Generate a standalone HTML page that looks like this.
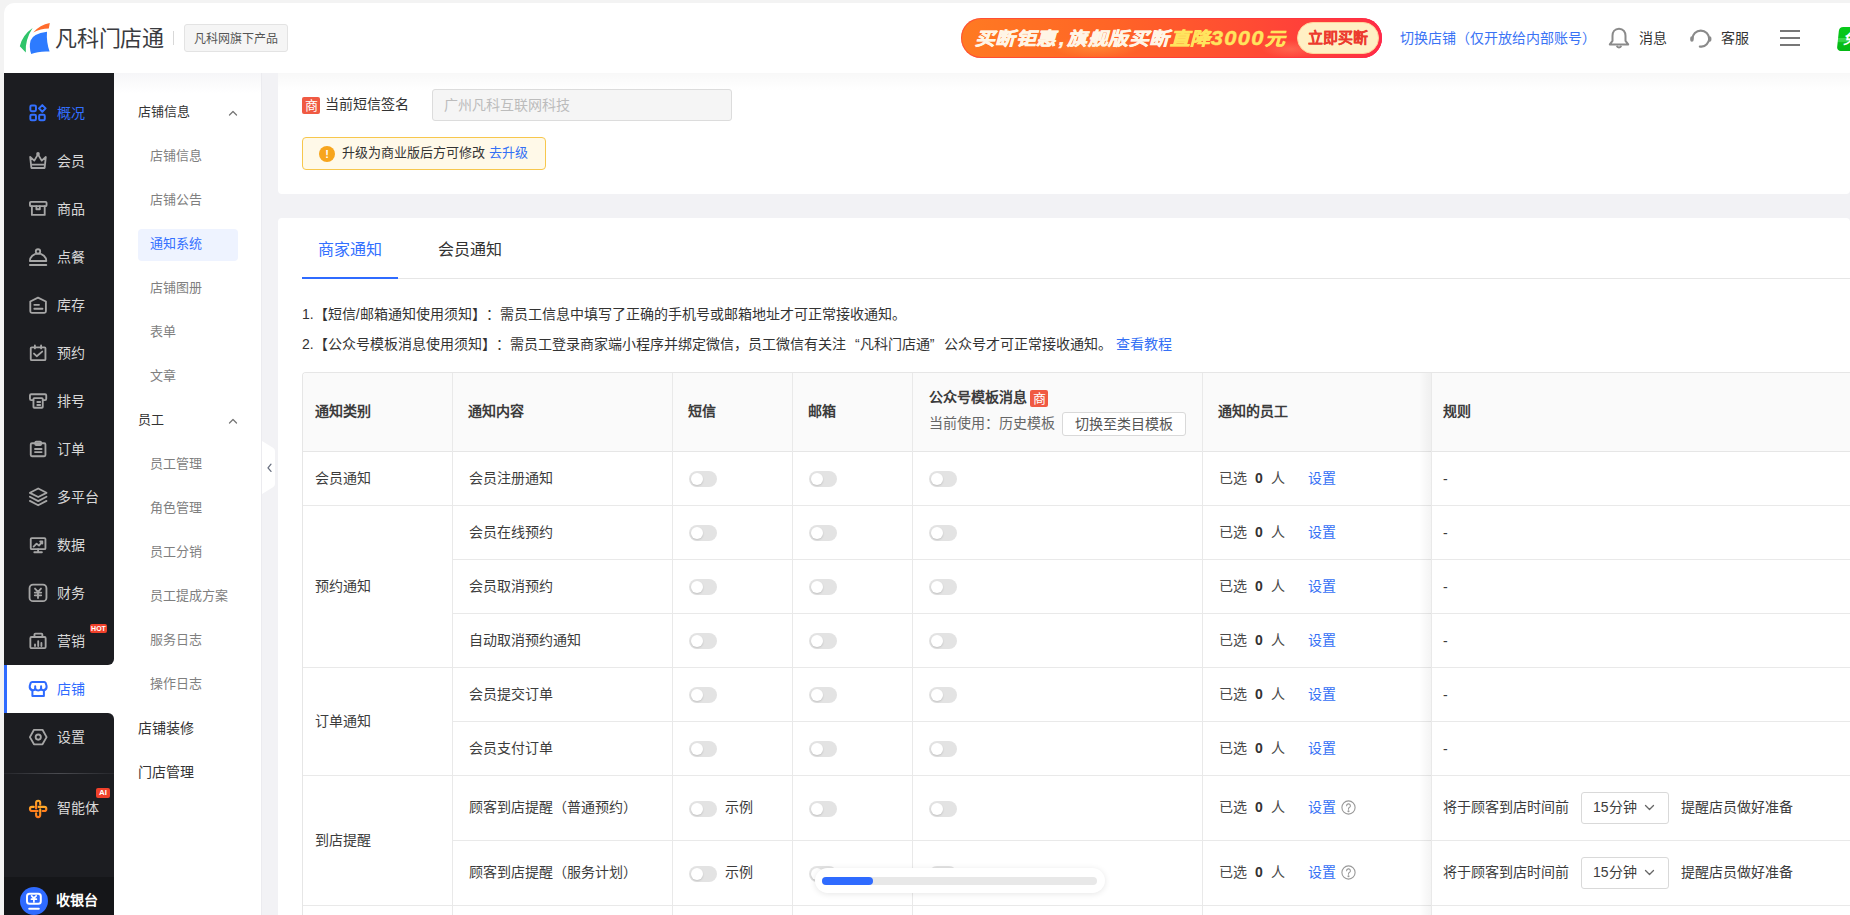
<!DOCTYPE html><html lang="zh-CN"><head><meta charset="utf-8"><style>
*{box-sizing:border-box;margin:0;padding:0}
html,body{width:1850px;height:915px;overflow:hidden;background:#f3f3f3;font-family:"Liberation Sans",sans-serif;color:#333;text-spacing-trim:space-all}
body{position:relative}
.a{position:absolute}
.t{position:absolute;white-space:nowrap}
svg{position:absolute;overflow:visible}
.nt{position:absolute;left:57px;font-size:14px;line-height:16px;color:#d8d8d8;white-space:nowrap}
.si{position:absolute;left:150px;font-size:13px;line-height:16px;color:#7f7f7f;white-space:nowrap}
.sg{position:absolute;left:138px;font-size:13px;line-height:16px;color:#333;white-space:nowrap}
.tg{position:absolute;width:28px;height:16px;border-radius:8px;background:#e3e3e3}
.tg:after{content:"";position:absolute;left:2px;top:2px;width:12px;height:12px;border-radius:50%;background:#fff;box-shadow:0 1px 2px rgba(0,0,0,.15)}
.ct{position:absolute;font-size:14px;line-height:16px;color:#3c3c3c;white-space:nowrap}
.hl{position:absolute;height:1px;background:#e9e9e9}
.vl{position:absolute;width:1px;background:#e9e9e9}
.lk{color:#3470f5}
</style></head><body>
<div class="a" style="left:4px;top:3px;width:1846px;height:912px;background:#f2f2f5;border-top-left-radius:10px"></div>
<div class="a" style="left:4px;top:3px;width:1846px;height:70px;background:#fff;border-top-left-radius:10px"></div>
<div class="a" style="left:114px;top:73px;width:147px;height:842px;background:#fff"></div>
<div class="a" style="left:261px;top:73px;width:1px;height:842px;background:#ebebef"></div>
<div class="a" style="left:4px;top:73px;width:110px;height:842px;background:#fff"></div>
<div class="a" style="left:4px;top:73px;width:110px;height:592px;background:#1c1d21;border-bottom-right-radius:6px"></div>
<div class="a" style="left:4px;top:713px;width:110px;height:202px;background:#1c1d21;border-top-right-radius:6px"></div>
<div class="a" style="left:4px;top:665px;width:3px;height:48px;background:#2f6bff"></div>
<div class="a" style="left:4px;top:773px;width:110px;height:1px;background:linear-gradient(90deg,#26272c,#4a4b50 50%,#26272c)"></div>
<div class="a" style="left:4px;top:877px;width:110px;height:38px;background:#151619"></div>
<svg style="left:28.5px;top:104px" width="18" height="18" viewBox="0 0 18 18" fill="none" stroke="#3370ff" stroke-width="2.0" stroke-linecap="round" stroke-linejoin="round"><rect x="1.35" y="1.55" width="5.6" height="5.6" rx="1.3"/><path d="M13.3 1.1 L16.6 4.4 L13.3 7.7 L10 4.4 Z"/><rect x="1.35" y="10.75" width="5.6" height="5.6" rx="1.3"/><rect x="10.15" y="10.75" width="5.6" height="5.6" rx="1.3"/></svg>
<div class="nt" style="top:105px;color:#3370ff">概况</div>
<svg style="left:28.5px;top:152px" width="18" height="18" viewBox="0 0 18 18" fill="none" stroke="#a6a6a6" stroke-width="1.85" stroke-linecap="round" stroke-linejoin="round"><path d="M1.2 5 L5.3 8.6 L9 2.4 L12.7 8.6 L16.8 5 L15.6 16 H2.4 Z"/><path d="M3.2 12.6 H14.8"/><circle cx="9" cy="1.9" r="0.9"/></svg>
<div class="nt" style="top:153px;color:#d8d8d8">会员</div>
<svg style="left:28.5px;top:199px" width="18" height="18" viewBox="0 0 18 18" fill="none" stroke="#a6a6a6" stroke-width="1.85" stroke-linecap="round" stroke-linejoin="round"><rect x="0.95" y="2.85" width="16.6" height="4.3" rx="1"/><path d="M2.9 7.1 V15.9 H15.7 V7.1"/><path d="M7.4 7.1 V10.2 H10.8 V7.1"/></svg>
<div class="nt" style="top:201px;color:#d8d8d8">商品</div>
<svg style="left:28.5px;top:247px" width="18" height="18" viewBox="0 0 18 18" fill="none" stroke="#a6a6a6" stroke-width="1.85" stroke-linecap="round" stroke-linejoin="round"><circle cx="9" cy="4.4" r="2.2"/><path d="M0.9 14 A8.2 7.4 0 0 1 17.3 14 Z"/><path d="M0.9 18 H17.3"/></svg>
<div class="nt" style="top:249px;color:#d8d8d8">点餐</div>
<svg style="left:28.5px;top:295px" width="18" height="18" viewBox="0 0 18 18" fill="none" stroke="#a6a6a6" stroke-width="1.85" stroke-linecap="round" stroke-linejoin="round"><path d="M1.3 6.5 L9 2.6 L16.9 6.5 V16.3 A1.5 1.5 0 0 1 15.4 17.8 H2.8 A1.5 1.5 0 0 1 1.3 16.3 Z"/><path d="M5.3 9.8 H10 M5.3 13.7 H13.5"/></svg>
<div class="nt" style="top:297px;color:#d8d8d8">库存</div>
<svg style="left:28.5px;top:343px" width="18" height="18" viewBox="0 0 18 18" fill="none" stroke="#a6a6a6" stroke-width="1.85" stroke-linecap="round" stroke-linejoin="round"><rect x="1.75" y="4.35" width="14.7" height="12.8" rx="1"/><path d="M5.9 2.4 V5.4 M12.1 2.4 V5.4"/><path d="M5 10.6 L7.7 13.2 L13.2 8.6"/></svg>
<div class="nt" style="top:345px;color:#d8d8d8">预约</div>
<svg style="left:28.5px;top:391px" width="18" height="18" viewBox="0 0 18 18" fill="none" stroke="#a6a6a6" stroke-width="1.85" stroke-linecap="round" stroke-linejoin="round"><path d="M4.45 9.05 H2.2 A1.25 1.25 0 0 1 0.95 7.8 V4.5 A1.25 1.25 0 0 1 2.2 3.25 H16 A1.25 1.25 0 0 1 17.25 4.5 V7.8 A1.25 1.25 0 0 1 16 9.05 H13.75"/><rect x="4.45" y="7.15" width="9.3" height="9.6" rx="0.8"/><path d="M8.3 11 H11.2 M8.3 14 H11.2"/></svg>
<div class="nt" style="top:393px;color:#d8d8d8">排号</div>
<svg style="left:28.5px;top:439px" width="18" height="18" viewBox="0 0 18 18" fill="none" stroke="#a6a6a6" stroke-width="1.85" stroke-linecap="round" stroke-linejoin="round"><rect x="1.75" y="4.25" width="14.7" height="13" rx="1.2"/><rect x="6.3" y="2.6" width="5.8" height="3.4" rx="0.8"/><path d="M6 10 H12.6 M6 13.1 H12.6"/></svg>
<div class="nt" style="top:441px;color:#d8d8d8">订单</div>
<svg style="left:28.5px;top:487px" width="18" height="18" viewBox="0 0 18 18" fill="none" stroke="#a6a6a6" stroke-width="1.85" stroke-linecap="round" stroke-linejoin="round"><path d="M9.2 1.5 L17.5 5.8 L9.2 10 L0.9 5.8 Z"/><path d="M0.9 9.8 L9.2 14.1 L17.5 9.8"/><path d="M0.9 13.9 L9.2 18.2 L17.5 13.9"/></svg>
<div class="nt" style="top:489px;color:#d8d8d8">多平台</div>
<svg style="left:28.5px;top:535px" width="18" height="18" viewBox="0 0 18 18" fill="none" stroke="#a6a6a6" stroke-width="1.85" stroke-linecap="round" stroke-linejoin="round"><rect x="1.75" y="3.05" width="14.7" height="11.1" rx="1"/><path d="M9.1 14.2 V17 M5.3 17.2 H12.9"/><path d="M4.6 11.6 L7.6 8.6 L10 10.6 L13.3 6.6 M11.2 6.5 H13.3 V8.6"/></svg>
<div class="nt" style="top:537px;color:#d8d8d8">数据</div>
<svg style="left:28.5px;top:583px" width="18" height="18" viewBox="0 0 18 18" fill="none" stroke="#a6a6a6" stroke-width="1.85" stroke-linecap="round" stroke-linejoin="round"><rect x="0.55" y="1.65" width="16.9" height="16.5" rx="3.5"/><path d="M6 5.6 L9 8.8 L12 5.6 M9 8.8 V15 M5.8 9.6 H12.2 M5.8 12.3 H12.2"/></svg>
<div class="nt" style="top:585px;color:#d8d8d8">财务</div>
<svg style="left:28.5px;top:631px" width="18" height="18" viewBox="0 0 18 18" fill="none" stroke="#a6a6a6" stroke-width="1.85" stroke-linecap="round" stroke-linejoin="round"><path d="M5.45 5.95 V3.5 A0.9 0.9 0 0 1 6.35 2.6 H12.45 A0.9 0.9 0 0 1 13.35 3.5 V5.95"/><rect x="1.35" y="5.95" width="15.3" height="11.2" rx="1.2"/><path d="M6 15 V13.4 M9.2 15 V10.2 M12.4 15 V12"/></svg>
<div class="nt" style="top:633px;color:#d8d8d8">营销</div>
<svg style="left:28.5px;top:680px" width="18" height="18" viewBox="0 0 18 18" fill="none" stroke="#2f6bff" stroke-width="2.0" stroke-linecap="round" stroke-linejoin="round"><path d="M3.3 1.9 H15.2 Q16.2 1.9 16.6 2.9 L17.6 6 Q18 9.5 14.8 10.3 Q12.6 10.6 12.1 8.8 Q10.9 10.6 9.2 10.6 Q7.4 10.6 6.2 8.8 Q5.7 10.6 3.5 10.3 Q0.3 9.5 0.7 6 L1.7 2.9 Q2.1 1.9 3.3 1.9 Z"/><path d="M6.2 6.2 V9 M12.1 6.2 V9"/><path d="M3.4 10.4 V15.9 H14.9 V10.4"/></svg>
<div class="nt" style="top:681px;color:#2f6bff">店铺</div>
<svg style="left:28.5px;top:728px" width="18" height="18" viewBox="0 0 18 18" fill="none" stroke="#a6a6a6" stroke-width="1.85" stroke-linecap="round" stroke-linejoin="round"><path d="M5 1.8 H13.5 L17.6 9.1 L13.5 16.3 H5 L0.9 9.1 Z"/><circle cx="9.25" cy="9.1" r="2.6"/></svg>
<div class="nt" style="top:729px;color:#d8d8d8">设置</div>
<div class="a" style="left:90px;top:624px;width:17px;height:9px;background:#f0412b;border-radius:2px;color:#fff;font-size:7px;font-weight:bold;line-height:9px;text-align:center;letter-spacing:0">HOT</div>
<svg style="left:28px;top:799px" width="20" height="20" viewBox="0 0 20 20" fill="none" stroke="url(#og)" stroke-width="2.1" stroke-linecap="round"><defs><linearGradient id="og" x1="0" y1="0" x2="0" y2="1"><stop offset="0" stop-color="#ffab2a"/><stop offset="1" stop-color="#ff7a1c"/></linearGradient></defs><path d="M8.1 9.5 V3.8 A2.05 2.05 0 0 1 12.2 3.8 V5.6"/><path d="M10.6 7.9 H16.3 A2.05 2.05 0 0 1 16.3 12 H14.5"/><path d="M12.2 10.4 V16.1 A2.05 2.05 0 0 1 8.1 16.1 V14.3"/><path d="M9.7 12 H4 A2.05 2.05 0 0 1 4 7.9 H5.8"/></svg>
<div class="nt" style="top:800px;color:#d8d8d8">智能体</div>
<div class="a" style="left:96px;top:788px;width:14px;height:10px;background:#f0412b;border-radius:2px;color:#fff;font-size:8px;font-weight:bold;line-height:10px;text-align:center">AI</div>
<div class="a" style="left:20px;top:887px;width:28px;height:28px;border-radius:50%;background:#2f6bff"></div>
<svg style="left:20px;top:887px" width="28" height="28" viewBox="0 0 28 28" fill="none" stroke="#fff" stroke-width="1.8" stroke-linecap="round"><rect x="7" y="6.7" width="13.8" height="10.1" rx="2.5" stroke-width="2"/><path d="M11.6 8.8 L13.9 11.2 L16.2 8.8 M13.9 11.2 V15 M11.4 12.2 H16.4" stroke-width="1.7"/><path d="M9.2 21.8 H18.8" stroke-width="2"/></svg>
<div class="t" style="left:56px;top:892px;font-size:14px;line-height:16px;color:#fff;font-weight:bold">收银台</div>
<div class="a" style="left:114px;top:73px;width:147px;height:20px;background:linear-gradient(#f6f6f8,#fff)"></div>
<div class="sg" style="top:104px">店铺信息</div>
<svg style="left:228px;top:110px" width="10" height="6" viewBox="0 0 10 6" fill="none" stroke="#777" stroke-width="1.3" stroke-linecap="round" stroke-linejoin="round"><path d="M1.5 5 L5 1.5 L8.5 5"/></svg>
<div class="a" style="left:138px;top:229px;width:100px;height:32px;border-radius:4px;background:#eef3ff"></div>
<div class="si" style="top:148px;color:#7f7f7f">店铺信息</div>
<div class="si" style="top:192px;color:#7f7f7f">店铺公告</div>
<div class="si" style="top:236px;color:#3370ff">通知系统</div>
<div class="si" style="top:280px;color:#7f7f7f">店铺图册</div>
<div class="si" style="top:324px;color:#7f7f7f">表单</div>
<div class="si" style="top:368px;color:#7f7f7f">文章</div>
<div class="sg" style="top:412px">员工</div>
<svg style="left:228px;top:418px" width="10" height="6" viewBox="0 0 10 6" fill="none" stroke="#777" stroke-width="1.3" stroke-linecap="round" stroke-linejoin="round"><path d="M1.5 5 L5 1.5 L8.5 5"/></svg>
<div class="si" style="top:456px">员工管理</div>
<div class="si" style="top:500px">角色管理</div>
<div class="si" style="top:544px">员工分销</div>
<div class="si" style="top:588px">员工提成方案</div>
<div class="si" style="top:632px">服务日志</div>
<div class="si" style="top:676px">操作日志</div>
<div class="sg" style="top:720px;font-size:14px">店铺装修</div>
<div class="sg" style="top:764px;font-size:14px">门店管理</div>
<svg style="left:262px;top:441px" width="14" height="53" viewBox="0 0 14 53"><path d="M0 0 L11 6.8 Q13 8 13 10 V43 Q13 45 11 46.2 L0 53 Z" fill="#fff"/><path d="M9 23.2 L6 26.8 L9 30.4" fill="none" stroke="#697080" stroke-width="1.3" stroke-linecap="round" stroke-linejoin="round"/></svg>
<svg style="left:0;top:0" width="60" height="60" viewBox="0 0 60 60"><path d="M32.6 28 Q22.5 35 19.8 46.2 L25.8 52.6 Q24.8 40 32.6 28 Z" fill="#2fc46a"/><path d="M33.2 32.6 Q40 24.6 49.8 23 L48.8 28.6 Q40.5 28.8 33.2 32.6 Z" fill="#ff6b2c"/><path d="M30.6 40.5 Q32.5 34 47 31.8 Q46.2 42 49.6 51.6 Q38.5 51 31.2 54 Q28.8 47 30.6 40.5 Z" fill="#2d7bff"/></svg>
<div class="t" style="left:55px;top:26px;font-size:22px;line-height:26px;color:#3a3b3f;letter-spacing:-0.2px">凡科门店通</div>
<div class="a" style="left:173px;top:31px;width:1px;height:14px;background:#d8d8d8"></div>
<div class="t" style="left:184px;top:24px;width:104px;height:28px;border:1px solid #e3e3e3;background:#f5f5f5;border-radius:3px;font-size:12px;line-height:28px;text-align:center;color:#555">凡科网旗下产品</div>
<div class="a" style="left:961px;top:18px;width:421px;height:40px;border-radius:20px;background:linear-gradient(90deg,#ff7a22 0%,#ff6526 35%,#ff4a34 70%,#ff2f43 100%);overflow:hidden"><div class="a" style="left:90px;top:18px;width:90px;height:22px;background:radial-gradient(ellipse at center,rgba(255,190,80,.35),rgba(255,190,80,0) 70%)"></div><div class="a" style="left:300px;top:22px;width:60px;height:18px;background:radial-gradient(ellipse at center,rgba(255,160,120,.35),rgba(255,160,120,0) 70%)"></div><div class="t" style="left:14px;top:10px;font-size:18px;line-height:20px;font-weight:bold;font-style:italic;color:#fff5e6;-webkit-text-stroke:0.5px #fff5e6;transform-origin:0 50%;transform:scaleX(1.1);letter-spacing:0.6px">买断钜惠<span style="margin:0 2px">,</span>旗舰版买断<span style="color:#ffe45e;-webkit-text-stroke:0.5px #ffe45e">直降<span style="letter-spacing:1.2px;font-size:20px;-webkit-text-stroke:0.4px #ffe45e">3000</span>元</span></div><div class="a" style="left:336px;top:4px;width:82px;height:32px;border-radius:16px;background:#fff0c4;border:1px solid #ffd39a"></div><div class="t" style="left:347px;top:11px;font-size:15px;line-height:18px;font-weight:bold;color:#ec3a2e;-webkit-text-stroke:0.15px #ec3a2e">立即买断</div></div>
<div class="a" style="left:961px;top:18px;width:421px;height:40px;border-radius:20px;box-shadow:inset -2px 0 0 #ff2a4a, inset 0 0 0 1px rgba(255,40,70,.5)"></div>
<div class="t lk" style="left:1400px;top:30px;font-size:14px;line-height:16px;color:#3a73f5">切换店铺（仅开放给内部账号）</div>
<svg style="left:1608px;top:27px" width="22" height="22" viewBox="0 0 22 22" fill="none" stroke="#8a8a8a" stroke-width="2" stroke-linejoin="round"><path d="M11 1.8 C6.6 1.8 4.5 5.2 4.5 8.8 V13.8 L1.8 17.4 H20.2 L17.5 13.8 V8.8 C17.5 5.2 15.4 1.8 11 1.8 Z"/><path d="M8.8 18.8 A2.3 2.3 0 0 0 13.2 18.8"/></svg>
<div class="t" style="left:1639px;top:30px;font-size:14px;line-height:16px;color:#333">消息</div>
<svg style="left:1689px;top:27px" width="24" height="22" viewBox="0 0 24 22" fill="none" stroke="#8a8a8a" stroke-width="2.1" stroke-linecap="round"><path d="M3.4 12 A8.4 8.4 0 1 1 20.2 12"/><path d="M20.2 12 A8.4 8.4 0 0 1 12.5 19.6 H10.8"/><rect x="1.2" y="9.2" width="3.4" height="5.6" rx="1.7" fill="#8a8a8a" stroke="none"/><rect x="19" y="9.2" width="3.4" height="5.6" rx="1.7" fill="#8a8a8a" stroke="none"/></svg>
<div class="t" style="left:1721px;top:30px;font-size:14px;line-height:16px;color:#333">客服</div>
<div class="a" style="left:1780px;top:30px;width:20px;height:2px;background:#777"></div><div class="a" style="left:1780px;top:37px;width:20px;height:2px;background:#777"></div><div class="a" style="left:1780px;top:44px;width:20px;height:2px;background:#777"></div>
<div class="a" style="left:1838px;top:27px;width:30px;height:24px;border-radius:4px;background:linear-gradient(#07c91a 0%,#06c418 45%,#3ad84a 48%,#2fd040 62%,#06be16 65%,#04b814 100%);transform:skewX(-6deg);overflow:hidden"></div><div class="t" style="left:1843px;top:30px;font-size:15px;line-height:18px;color:#fff;font-weight:bold;font-style:italic">免</div>
<div class="a" style="left:278px;top:73px;width:1572px;height:121px;background:#fff;border-radius:0 0 4px 4px"></div>
<div class="a" style="left:278px;top:218px;width:1572px;height:697px;background:#fff;border-radius:4px 4px 0 0"></div>
<div class="a" style="left:278px;top:73px;width:1572px;height:18px;background:linear-gradient(rgba(0,0,0,.028),rgba(0,0,0,0))"></div>
<div class="a" style="left:302px;top:97px;width:18px;height:17px;border-radius:2px;background:#f05a43;color:#fff;font-size:13px;line-height:17px;text-align:center">商</div>
<div class="t" style="left:325px;top:96px;font-size:14px;line-height:16px;color:#333">当前短信签名</div>
<div class="a" style="left:432px;top:89px;width:300px;height:32px;border:1px solid #dcdcdc;border-radius:3px;background:#f5f5f5"></div>
<div class="t" style="left:444px;top:97px;font-size:14px;line-height:16px;color:#bcbcbc">广州凡科互联网科技</div>
<div class="a" style="left:302px;top:137px;width:244px;height:33px;border:1px solid #f7c74d;border-radius:4px;background:#fff9e8"></div>
<div class="a" style="left:319px;top:146px;width:16px;height:16px;border-radius:50%;background:#f7a51c;color:#fff;font-size:11px;line-height:16px;text-align:center;font-weight:bold">!</div>
<div class="t" style="left:342px;top:145px;font-size:13px;line-height:16px;color:#333">升级为商业版后方可修改 <span class="lk">去升级</span></div>
<div class="t" style="left:318px;top:240px;font-size:16px;line-height:19px;color:#3370ff">商家通知</div>
<div class="t" style="left:438px;top:240px;font-size:16px;line-height:19px;color:#333">会员通知</div>
<div class="a" style="left:302px;top:278px;width:1548px;height:1px;background:#e6e6e6"></div>
<div class="a" style="left:302px;top:277px;width:96px;height:2px;background:#2f6bff"></div>
<div class="t" style="left:302px;top:306px;font-size:14px;line-height:16px;color:#333">1.【短信/邮箱通知使用须知】：需员工信息中填写了正确的手机号或邮箱地址才可正常接收通知。</div>
<div class="t" style="left:302px;top:336px;font-size:14px;line-height:16px;color:#333">2.【公众号模板消息使用须知】：需员工登录商家端小程序并绑定微信，员工微信有关注<span style="display:inline-block;width:14px;text-align:right">“</span>凡科门店通<span style="display:inline-block;width:14px;text-align:left">”</span>公众号才可正常接收通知。 <span class="lk">查看教程</span></div>
<div class="a" style="left:302px;top:372px;width:1548px;height:543px;border:1px solid #e6e6e6;border-right:none;border-bottom:none;border-top-left-radius:4px;overflow:hidden"><div class="a" style="left:0;top:0;width:1548px;height:79px;background:#fafafa"></div></div>
<div class="hl" style="left:302px;top:451px;width:1548px;background:#e6e6e6"></div>
<div class="vl" style="left:452px;top:373px;height:542px"></div>
<div class="vl" style="left:672px;top:373px;height:542px"></div>
<div class="vl" style="left:792px;top:373px;height:542px"></div>
<div class="vl" style="left:912px;top:373px;height:542px"></div>
<div class="vl" style="left:1202px;top:373px;height:542px"></div>
<div class="vl" style="left:1431px;top:373px;height:542px"></div>
<div class="hl" style="left:303px;top:505px;width:1547px"></div>
<div class="hl" style="left:303px;top:667px;width:1547px"></div>
<div class="hl" style="left:303px;top:775px;width:1547px"></div>
<div class="hl" style="left:303px;top:905px;width:1547px"></div>
<div class="hl" style="left:452px;top:559px;width:1398px"></div>
<div class="hl" style="left:452px;top:613px;width:1398px"></div>
<div class="hl" style="left:452px;top:721px;width:1398px"></div>
<div class="hl" style="left:452px;top:840px;width:1398px"></div>
<div class="a" style="left:1419px;top:373px;width:12px;height:542px;background:linear-gradient(90deg,rgba(0,0,0,0),rgba(0,0,0,.045))"></div>
<div class="ct" style="left:315px;top:403px;font-weight:bold;">通知类别</div>
<div class="ct" style="left:468px;top:403px;font-weight:bold;">通知内容</div>
<div class="ct" style="left:688px;top:403px;font-weight:bold;">短信</div>
<div class="ct" style="left:808px;top:403px;font-weight:bold;">邮箱</div>
<div class="ct" style="left:929px;top:389px;font-weight:bold;">公众号模板消息</div>
<div class="a" style="left:1030px;top:390px;width:18px;height:17px;border-radius:2px;background:#f05a43;color:#fff;font-size:13px;line-height:17px;text-align:center">商</div>
<div class="ct" style="left:929px;top:415px;color:#666">当前使用：历史模板</div>
<div class="a" style="left:1062px;top:412px;width:124px;height:24px;border:1px solid #d9d9d9;border-radius:3px;background:#fff"></div>
<div class="ct" style="left:1075px;top:416px;color:#555">切换至类目模板</div>
<div class="ct" style="left:1218px;top:403px;font-weight:bold;">通知的员工</div>
<div class="ct" style="left:1443px;top:403px;font-weight:bold;">规则</div>
<div class="ct" style="left:315px;top:470px">会员通知</div>
<div class="ct" style="left:315px;top:578px">预约通知</div>
<div class="ct" style="left:315px;top:713px">订单通知</div>
<div class="ct" style="left:315px;top:832px">到店提醒</div>
<div class="ct" style="left:469px;top:470px">会员注册通知</div>
<div class="tg" style="left:689px;top:471px"></div>
<div class="tg" style="left:809px;top:471px"></div>
<div class="tg" style="left:929px;top:471px"></div>
<div class="ct" style="left:1219px;top:470px;color:#4a4a4a">已选 <b style="display:inline-block;margin:0 4px;color:#333">0</b> 人<span class="lk" style="margin-left:23px">设置</span></div>
<div class="ct" style="left:1443px;top:471px">-</div>
<div class="ct" style="left:469px;top:524px">会员在线预约</div>
<div class="tg" style="left:689px;top:525px"></div>
<div class="tg" style="left:809px;top:525px"></div>
<div class="tg" style="left:929px;top:525px"></div>
<div class="ct" style="left:1219px;top:524px;color:#4a4a4a">已选 <b style="display:inline-block;margin:0 4px;color:#333">0</b> 人<span class="lk" style="margin-left:23px">设置</span></div>
<div class="ct" style="left:1443px;top:525px">-</div>
<div class="ct" style="left:469px;top:578px">会员取消预约</div>
<div class="tg" style="left:689px;top:579px"></div>
<div class="tg" style="left:809px;top:579px"></div>
<div class="tg" style="left:929px;top:579px"></div>
<div class="ct" style="left:1219px;top:578px;color:#4a4a4a">已选 <b style="display:inline-block;margin:0 4px;color:#333">0</b> 人<span class="lk" style="margin-left:23px">设置</span></div>
<div class="ct" style="left:1443px;top:579px">-</div>
<div class="ct" style="left:469px;top:632px">自动取消预约通知</div>
<div class="tg" style="left:689px;top:633px"></div>
<div class="tg" style="left:809px;top:633px"></div>
<div class="tg" style="left:929px;top:633px"></div>
<div class="ct" style="left:1219px;top:632px;color:#4a4a4a">已选 <b style="display:inline-block;margin:0 4px;color:#333">0</b> 人<span class="lk" style="margin-left:23px">设置</span></div>
<div class="ct" style="left:1443px;top:633px">-</div>
<div class="ct" style="left:469px;top:686px">会员提交订单</div>
<div class="tg" style="left:689px;top:687px"></div>
<div class="tg" style="left:809px;top:687px"></div>
<div class="tg" style="left:929px;top:687px"></div>
<div class="ct" style="left:1219px;top:686px;color:#4a4a4a">已选 <b style="display:inline-block;margin:0 4px;color:#333">0</b> 人<span class="lk" style="margin-left:23px">设置</span></div>
<div class="ct" style="left:1443px;top:687px">-</div>
<div class="ct" style="left:469px;top:740px">会员支付订单</div>
<div class="tg" style="left:689px;top:741px"></div>
<div class="tg" style="left:809px;top:741px"></div>
<div class="tg" style="left:929px;top:741px"></div>
<div class="ct" style="left:1219px;top:740px;color:#4a4a4a">已选 <b style="display:inline-block;margin:0 4px;color:#333">0</b> 人<span class="lk" style="margin-left:23px">设置</span></div>
<div class="ct" style="left:1443px;top:741px">-</div>
<div class="ct" style="left:469px;top:799px">顾客到店提醒（普通预约）</div>
<div class="tg" style="left:689px;top:801px"></div>
<div class="tg" style="left:809px;top:801px"></div>
<div class="tg" style="left:929px;top:801px"></div>
<div class="ct" style="left:725px;top:799px">示例</div>
<div class="ct" style="left:1219px;top:799px;color:#4a4a4a">已选 <b style="display:inline-block;margin:0 4px;color:#333">0</b> 人<span class="lk" style="margin-left:23px">设置</span></div>
<svg style="left:1341px;top:800px" width="15" height="15" viewBox="0 0 15 15" fill="none" stroke="#999" stroke-width="1.1"><circle cx="7.5" cy="7.5" r="6.6"/><path d="M5.6 5.8 A1.9 1.9 0 1 1 8.3 7.5 C7.7 7.8 7.5 8.2 7.5 8.9 V9.3" stroke-linecap="round"/><circle cx="7.5" cy="11.3" r="0.5" fill="#999"/></svg>
<div class="ct" style="left:1443px;top:799px">将于顾客到店时间前</div>
<div class="a" style="left:1581px;top:792px;width:88px;height:32px;border:1px solid #d9d9d9;border-radius:3px;background:#fff"></div>
<div class="ct" style="left:1593px;top:799px">15分钟</div>
<svg style="left:1644px;top:804px" width="11" height="7" viewBox="0 0 11 7" fill="none" stroke="#666" stroke-width="1.3" stroke-linecap="round" stroke-linejoin="round"><path d="M1.5 1.5 L5.5 5.5 L9.5 1.5"/></svg>
<div class="ct" style="left:1681px;top:799px">提醒店员做好准备</div>
<div class="ct" style="left:469px;top:864px">顾客到店提醒（服务计划）</div>
<div class="tg" style="left:689px;top:866px"></div>
<div class="tg" style="left:809px;top:866px"></div>
<div class="tg" style="left:929px;top:866px"></div>
<div class="ct" style="left:725px;top:864px">示例</div>
<div class="ct" style="left:1219px;top:864px;color:#4a4a4a">已选 <b style="display:inline-block;margin:0 4px;color:#333">0</b> 人<span class="lk" style="margin-left:23px">设置</span></div>
<svg style="left:1341px;top:865px" width="15" height="15" viewBox="0 0 15 15" fill="none" stroke="#999" stroke-width="1.1"><circle cx="7.5" cy="7.5" r="6.6"/><path d="M5.6 5.8 A1.9 1.9 0 1 1 8.3 7.5 C7.7 7.8 7.5 8.2 7.5 8.9 V9.3" stroke-linecap="round"/><circle cx="7.5" cy="11.3" r="0.5" fill="#999"/></svg>
<div class="ct" style="left:1443px;top:864px">将于顾客到店时间前</div>
<div class="a" style="left:1581px;top:857px;width:88px;height:32px;border:1px solid #d9d9d9;border-radius:3px;background:#fff"></div>
<div class="ct" style="left:1593px;top:864px">15分钟</div>
<svg style="left:1644px;top:869px" width="11" height="7" viewBox="0 0 11 7" fill="none" stroke="#666" stroke-width="1.3" stroke-linecap="round" stroke-linejoin="round"><path d="M1.5 1.5 L5.5 5.5 L9.5 1.5"/></svg>
<div class="ct" style="left:1681px;top:864px">提醒店员做好准备</div>
<div class="a" style="left:815px;top:868px;width:290px;height:25px;border-radius:13px;background:#fff;box-shadow:0 1px 6px rgba(0,0,0,.10)"></div>
<div class="a" style="left:822px;top:877px;width:275px;height:8px;border-radius:4px;background:#e8e8e8"></div>
<div class="a" style="left:822px;top:877px;width:51px;height:8px;border-radius:4px;background:#2f6bff"></div>
</body></html>
